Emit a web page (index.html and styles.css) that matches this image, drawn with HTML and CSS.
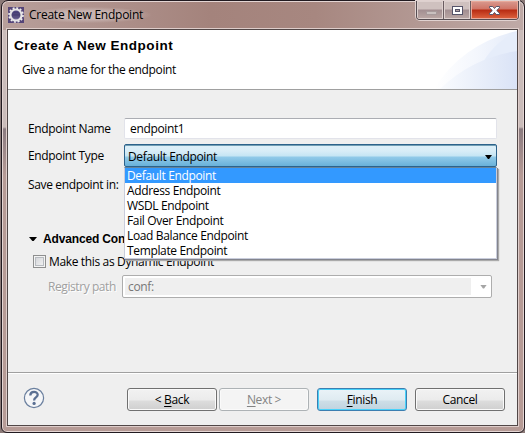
FILE: index.html
```html
<!DOCTYPE html>
<html lang="en">
<head>
<meta charset="utf-8">
<title>Create New Endpoint</title>
<link rel="stylesheet" href="styles.css">
</head>
<body>
<main class="window">
  <header class="titlebar">
    <svg class="app-icon" width="16" height="16" viewBox="0 0 16 16"><defs><linearGradient id="lens" x2="0" y2="1"><stop stop-color="#5d5790"/><stop offset=".5" stop-color="#332b61"/><stop offset="1" stop-color="#8781ac"/></linearGradient></defs><rect width="16" height="16" fill="#554578"/><circle cx="8" cy="8" r="7" fill="none" stroke="#eee" stroke-width="1.7" stroke-dasharray="2 1.665"/><circle cx="8" cy="8" r="5.5" fill="url(#lens)" stroke="#e6e5e6" stroke-width="2.1"/><path d="M4 7h8M4 9h8" stroke="#77719b" stroke-width=".6"/></svg>
    <h1 class="title"><span>Create New Endpoint</span></h1>
    <div class="controls">
      <span class="control minimize"><svg width="27" height="18"><rect x="9.5" y="10.5" width="10" height="3" fill="#c9c0bf" stroke="#a79a9b"/></svg></span>
      <span class="control"><svg width="26" height="18"><rect x="8.5" y="5.5" width="10" height="8" fill="#fff" stroke="#565469"/><rect x="11.5" y="8.5" width="4" height="2" fill="#b1a0a0" stroke="#565469"/></svg></span>
      <span class="control close"><svg width="46" height="18"><path d="M18.5 5.5h3.3l1.7 2 1.7-2h3.3v1.3l-2.8 2.7 2.8 2.7v1.3h-3.3l-1.7-2-1.7 2h-3.3v-1.3l2.8-2.7-2.8-2.7z" fill="#fff" stroke="#55566b"/></svg></span>
    </div>
  </header>
  <div class="client">
    <section class="banner">
      <svg class="swoosh" width="110" height="59" viewBox="0 0 110 59"><defs><linearGradient id="wash"><stop stop-color="#fff"/><stop offset=".5" stop-color="#f4f7fd"/><stop offset="1" stop-color="#e4ebf9"/></linearGradient><linearGradient id="wash2"><stop stop-color="#f9fbfe"/><stop offset="1" stop-color="#dae3f6"/></linearGradient></defs><path d="M27 59C47 27 77 8 110 1v58z" fill="url(#wash)"/><path d="M64 59C73 32 87 11 110 2v57z" fill="#e6edfa"/><path d="M33 59C54 38 82 25 110 21v38z" fill="url(#wash2)"/></svg>
      <h2><span>Create A New Endpoint</span></h2>
      <p><span>Give a name for the endpoint</span></p>
    </section>
    <form class="form">
      <div class="field name-row"><label>Endpoint Name</label><div class="input"><span>endpoint1</span></div></div>
      <div class="field type-row"><label>Endpoint Type</label>
        <div class="combo"><span>Default Endpoint</span><i class="arrow"></i>
          <ul class="options">
            <li class="selected"><span>Default Endpoint</span></li>
            <li><span>Address Endpoint</span></li>
            <li><span>WSDL Endpoint</span></li>
            <li><span>Fail Over Endpoint</span></li>
            <li><span>Load Balance Endpoint</span></li>
            <li><span>Template Endpoint</span></li>
          </ul>
        </div>
      </div>
      <div class="field save-row"><label>Save endpoint in:</label></div>
      <div class="section"><i class="arrow"></i><span>Advanced Conf</span></div>
      <div class="check"><i class="box"></i><span>Make this as Dynamic Endpoint</span></div>
      <div class="registry"><label>Registry path</label><div class="disabled-combo"><div><span>conf:</span></div><i class="arrow"></i></div></div>
    </form>
    <footer>
      <svg class="help" width="22" height="22" viewBox="0 0 22 22"><circle cx="11" cy="11" r="9.6" fill="#f5f6f8" stroke="#6a7f9e" stroke-width="1.2"/><path d="M7.3 8.4C7.3 3.6 14.7 3.9 14.7 7.8c0 2.8-3.6 2.5-3.6 5.6" fill="none" stroke="#5b7093" stroke-width="2.3"/><circle cx="11.1" cy="16.4" r="1.6" fill="#5b7093"/></svg>
      <button class="back"><span>&lt; <u>B</u>ack</span></button>
      <button class="next" disabled><span><u>N</u>ext &gt;</span></button>
      <button class="finish"><span><u>F</u>inish</span></button>
      <button class="cancel"><span>Cancel</span></button>
    </footer>
  </div>
</main>
</body>
</html>
```
FILE: styles.css
```css
* { box-sizing: border-box; }
body { margin: 0; width: 525px; height: 433px; overflow: hidden; background: #8b7a78; padding-left: 1px; font: 12px/15px "Open Sans", "Noto Sans", sans-serif; color: #000; letter-spacing: -.35px; }
h1, h2, p, ul { margin: 0; padding: 0; font-weight: normal; }
ul { list-style: none; }
span, label { white-space: nowrap; }
.window { width: 524px; height: 433px; border: 1px solid #211a20; border-radius: 7px 7px 6px 6px; box-shadow: inset 0 0 0 1px #e4d5d3; padding: 0 5px 6px; background: linear-gradient(90deg, #b89f9b, #a4837c 40%, #a78780 60%, #bfaaa7) 0 0 / 100% 29px no-repeat, linear-gradient(#cabcba 0 126px, #8b7b80 128px, #b69b96 175px); }
.titlebar { height: 28px; display: flex; align-items: flex-start; }
.app-icon { margin: 6px 0 0 1px; flex: none; }
.title { font-size: 12px; line-height: 16px; margin: 6px 0 0 3px; padding: 0 8px 0 2px; letter-spacing: -.25px; background: radial-gradient(ellipse, #d3c4c2aa 35%, transparent 72%); }
.controls { margin-left: auto; display: flex; height: 19px; border: 1px solid #564d52; border-top: 0; border-radius: 0 0 4px 4px; box-shadow: 0 0 0 1px #e0d2d0; overflow: hidden; }
.control { width: 27px; height: 18px; box-shadow: inset 0 0 0 1px #ded1cf; border-right: 1px solid #6a5c60; background: linear-gradient(#cfc1bf 0 8px, #a28e91 9px, #bba8a5); }
.control svg { display: block; }
.close { width: 47px; border: 0; background: linear-gradient(#d89a90 0, #d07466 8px, #b72b12 9px, #df6540); box-shadow: inset 0 0 0 1px #e8a99a; }
.client { width: 511px; height: 397px; border: 1px solid #514747; box-shadow: 0 0 0 1px #decdca; background: #efefef; display: flex; flex-direction: column; }
.banner { height: 60px; background: #fff; border-bottom: 1px solid #a0a0a0; position: relative; }
.swoosh { position: absolute; right: 0; top: 0; }
h2 { font: bold 13.5px/16px "Liberation Sans", Arial, sans-serif; letter-spacing: .52px; padding: 8px 0 0 6px; }
p { padding: 8px 0 0 14px; }
.form { height: 282px; padding: 28px 20px 0; display: flex; flex-direction: column; }
.field { display: grid; grid-template-columns: 96px 373px; }
.field > label { line-height: 21px; }
.input { height: 21px; border: 1px solid #e2e3ea; border-top-color: #abadb3; border-radius: 2px; background: #fff; padding: 2px 5px; }
.type-row { margin-top: 5px; }
.type-row > label { line-height: 24px; }
.combo { position: relative; height: 23px; border: 1px solid #2c628b; border-radius: 2px; background: linear-gradient(#ddeff8 0 1px, #d8edf7, #c5e5f4 11px, #91cae9 12px, #68b1d9); box-shadow: inset 0 1px #709eb4; padding: 4px 3px; }
.arrow { display: block; width: 7px; height: 4px; background: #000; clip-path: polygon(0 0, 100% 0, 58% 100%, 42% 100%); }
.combo > .arrow { position: absolute; right: 4px; top: 10px; }
.options { position: absolute; z-index: 2; top: 22px; left: -1px; width: 373px; height: 92px; border: 1px solid #c9cddc; border-top-color: #658398; background: #fff; box-shadow: 1px 1px 0 #83848d, 2px 2px 1px #aaa; }
.options li { height: 15px; line-height: 15px; padding-left: 2px; }
.options .selected { background: #3399ff; color: #fff; }
.save-row { margin-top: 6px; }
.section { margin-top: 36px; height: 16px; display: flex; align-items: center; font: bold 12px/16px "Liberation Sans", Arial, sans-serif; letter-spacing: -.15px; gap: 6px; padding-left: 1px; }
.section .arrow { width: 8px; }
.check { margin: 8px 0 0 5px; height: 13px; display: flex; align-items: center; gap: 3px; }
.box { width: 13px; height: 13px; border: 1px solid #8e8f8f; background: linear-gradient(135deg, #cfd1d5, #f7f7f7); box-shadow: inset 0 0 0 1px #f4f4f4, inset 0 0 0 2px #b8bcc1; }
.registry { margin: 7px 0 0 20px; display: grid; grid-template-columns: 74px 370px; line-height: 23px; color: #a0a0a0; }
.registry > label { text-shadow: 1px 1px #fff; letter-spacing: -.42px; }
.disabled-combo { height: 23px; border: 1px solid #adadad; border-radius: 2px; background: #fff; padding: 2px; display: flex; align-items: center; color: #777; }
.disabled-combo div { width: 346px; height: 17px; background: #efefef; padding-left: 3px; line-height: 17px; }
.disabled-combo .arrow { margin-left: 9px; background: #a5a5a5; }
footer { flex: 1; border-top: 1px solid #a0a0a0; box-shadow: inset 0 1px #fff; display: flex; padding: 15px 12px 0 15px; }
.help { margin-top: -1px; flex: none; }
button { width: 90px; height: 23px; padding: 0; flex: none; border: 1px solid #707070; border-radius: 3px; box-shadow: inset 0 0 0 1px #fafafa; background: linear-gradient(#f2f2f2, #ebebeb 11px, #dddddd 12px, #cfcfcf); font: inherit; letter-spacing: inherit; color: #000; }
button u { text-underline-offset: 2px; }
.back { margin-left: 82px; }
.next { margin-left: 2px; border-color: #adb2b5; background: #f4f4f4; color: #838383; }
.finish { margin-left: 8px; border-color: #3c7fb1; box-shadow: inset 0 0 0 1px #48d2fa; background: linear-gradient(#eaf3f8, #dfebf1 11px, #cddee7 12px, #bfd3df); }
.cancel { margin-left: 8px; }
```
